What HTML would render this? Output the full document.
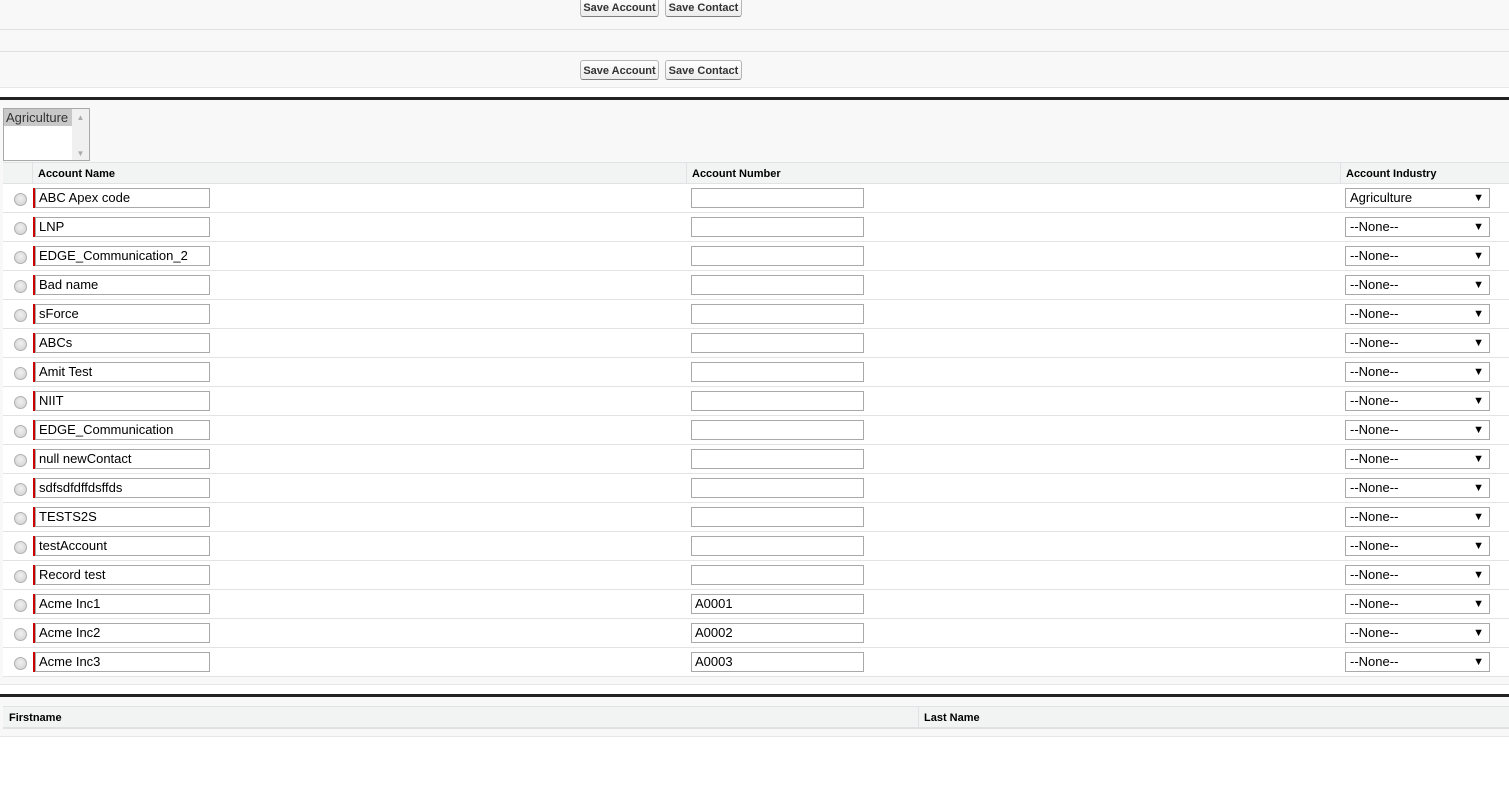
<!DOCTYPE html>
<html><head><meta charset="utf-8"><style>
*{box-sizing:border-box;margin:0;padding:0}
body{width:1509px;height:804px;background:#fff;font-family:"Liberation Sans",Arial,sans-serif;position:relative;overflow:hidden}
.a{position:absolute}
.btn{position:absolute;height:20px;border:1px solid #b5b5b5;border-bottom-color:#7f7f7f;border-radius:3px;background:linear-gradient(#fff,#ededed);font-size:11px;font-weight:bold;color:#333;line-height:20px;text-align:center}
.hd{position:absolute;font-size:11px;font-weight:bold;color:#000;top:0;line-height:22px}
.row{position:absolute;left:3px;width:1506px;height:29px;background:#fff;border-bottom:1px solid #e3e3e3}
.rad{position:absolute;left:11px;top:9px;width:13px;height:13px;border-radius:50%;background:radial-gradient(circle at 50% 40%,#f0f0f0,#cfcfcf);border:1px solid #b0b0b0}
.req{position:absolute;left:30px;top:4px;width:3px;height:20px;background:#c00}
.in{position:absolute;top:4px;height:20px;border:1px solid #a9a9a9;background:#fff;font-size:13px;line-height:18px;padding-left:3px;color:#000}
.sel{position:absolute;left:1342px;top:4px;width:145px;height:20px;border:1px solid #a9a9a9;background:#fff;font-size:13px;line-height:18px;padding-left:4px;color:#000}
.sel:after{content:"▼";position:absolute;right:5px;top:0;font-size:11px}
</style></head><body>
<div class="a" style="left:0;top:0;width:1509px;height:88px;background:#f8f8f8"></div>
<div class="a" style="left:0;top:29px;width:1509px;height:1px;background:#e0e0e0"></div>
<div class="a" style="left:0;top:51px;width:1509px;height:1px;background:#e0e0e0"></div>
<div class="a" style="left:0;top:87px;width:1509px;height:1px;background:#e8e8e8"></div>
<div class="btn" style="left:580px;top:-3px;width:79px">Save Account</div>
<div class="btn" style="left:665px;top:-3px;width:77px">Save Contact</div>
<div class="btn" style="left:580px;top:60px;width:79px">Save Account</div>
<div class="btn" style="left:665px;top:60px;width:77px">Save Contact</div>
<div class="a" style="left:0;top:97px;width:1509px;height:3px;background:#222"></div>
<div class="a" style="left:0;top:100px;width:1509px;height:585px;background:#f8f8f8;border-bottom:1px solid #e6e6e6"></div>
<div class="a" style="left:3px;top:108px;width:87px;height:53px;border:1px solid #a9a9a9;background:#fff">
 <div class="a" style="left:0;top:0;width:68px;height:17px;background:#c8c8c8;font-size:13px;line-height:17px;padding-left:2px;color:#333">Agriculture</div>
 <div class="a" style="left:68px;top:0;width:17px;height:51px;background:#f0f0f0;color:#aaa;font-size:8px;text-align:center;line-height:18px">▲<br><br>▼</div>
</div>
<div class="a" style="left:3px;top:162px;width:1506px;height:22px;background:#f2f3f3;border-top:1px solid #e0e3e5;border-bottom:1px solid #e0e3e5">
 <div class="a" style="left:29px;top:0;width:1px;height:21px;background:#e0e3e5"></div>
 <div class="a" style="left:683px;top:0;width:1px;height:21px;background:#e0e3e5"></div>
 <div class="a" style="left:1337px;top:0;width:1px;height:21px;background:#e0e3e5"></div>
 <div class="hd" style="left:35px">Account Name</div>
 <div class="hd" style="left:689px">Account Number</div>
 <div class="hd" style="left:1343px">Account Industry</div>
</div>
<div class="row" style="top:184px"><div class="rad"></div><div class="req"></div><div class="in" style="left:32px;width:175px">ABC Apex code</div><div class="in" style="left:688px;width:173px"></div><div class="sel">Agriculture</div></div>
<div class="row" style="top:213px"><div class="rad"></div><div class="req"></div><div class="in" style="left:32px;width:175px">LNP</div><div class="in" style="left:688px;width:173px"></div><div class="sel">--None--</div></div>
<div class="row" style="top:242px"><div class="rad"></div><div class="req"></div><div class="in" style="left:32px;width:175px">EDGE_Communication_2</div><div class="in" style="left:688px;width:173px"></div><div class="sel">--None--</div></div>
<div class="row" style="top:271px"><div class="rad"></div><div class="req"></div><div class="in" style="left:32px;width:175px">Bad name</div><div class="in" style="left:688px;width:173px"></div><div class="sel">--None--</div></div>
<div class="row" style="top:300px"><div class="rad"></div><div class="req"></div><div class="in" style="left:32px;width:175px">sForce</div><div class="in" style="left:688px;width:173px"></div><div class="sel">--None--</div></div>
<div class="row" style="top:329px"><div class="rad"></div><div class="req"></div><div class="in" style="left:32px;width:175px">ABCs</div><div class="in" style="left:688px;width:173px"></div><div class="sel">--None--</div></div>
<div class="row" style="top:358px"><div class="rad"></div><div class="req"></div><div class="in" style="left:32px;width:175px">Amit Test</div><div class="in" style="left:688px;width:173px"></div><div class="sel">--None--</div></div>
<div class="row" style="top:387px"><div class="rad"></div><div class="req"></div><div class="in" style="left:32px;width:175px">NIIT</div><div class="in" style="left:688px;width:173px"></div><div class="sel">--None--</div></div>
<div class="row" style="top:416px"><div class="rad"></div><div class="req"></div><div class="in" style="left:32px;width:175px">EDGE_Communication</div><div class="in" style="left:688px;width:173px"></div><div class="sel">--None--</div></div>
<div class="row" style="top:445px"><div class="rad"></div><div class="req"></div><div class="in" style="left:32px;width:175px">null newContact</div><div class="in" style="left:688px;width:173px"></div><div class="sel">--None--</div></div>
<div class="row" style="top:474px"><div class="rad"></div><div class="req"></div><div class="in" style="left:32px;width:175px">sdfsdfdffdsffds</div><div class="in" style="left:688px;width:173px"></div><div class="sel">--None--</div></div>
<div class="row" style="top:503px"><div class="rad"></div><div class="req"></div><div class="in" style="left:32px;width:175px">TESTS2S</div><div class="in" style="left:688px;width:173px"></div><div class="sel">--None--</div></div>
<div class="row" style="top:532px"><div class="rad"></div><div class="req"></div><div class="in" style="left:32px;width:175px">testAccount</div><div class="in" style="left:688px;width:173px"></div><div class="sel">--None--</div></div>
<div class="row" style="top:561px"><div class="rad"></div><div class="req"></div><div class="in" style="left:32px;width:175px">Record test</div><div class="in" style="left:688px;width:173px"></div><div class="sel">--None--</div></div>
<div class="row" style="top:590px"><div class="rad"></div><div class="req"></div><div class="in" style="left:32px;width:175px">Acme Inc1</div><div class="in" style="left:688px;width:173px">A0001</div><div class="sel">--None--</div></div>
<div class="row" style="top:619px"><div class="rad"></div><div class="req"></div><div class="in" style="left:32px;width:175px">Acme Inc2</div><div class="in" style="left:688px;width:173px">A0002</div><div class="sel">--None--</div></div>
<div class="row" style="top:648px"><div class="rad"></div><div class="req"></div><div class="in" style="left:32px;width:175px">Acme Inc3</div><div class="in" style="left:688px;width:173px">A0003</div><div class="sel">--None--</div></div>
<div class="a" style="left:0;top:694px;width:1509px;height:3px;background:#222"></div>
<div class="a" style="left:0;top:697px;width:1509px;height:40px;background:#f8f8f8;border-bottom:1px solid #e6e6e6"></div>
<div class="a" style="left:3px;top:706px;width:1506px;height:23px;background:#f2f3f3;border-top:1px solid #e0e3e5;border-bottom:2px solid #dfe1e3">
 <div class="a" style="left:915px;top:0;width:1px;height:21px;background:#e0e3e5"></div>
 <div class="hd" style="left:6px">Firstname</div>
 <div class="hd" style="left:921px">Last Name</div>
</div>
</body></html>
